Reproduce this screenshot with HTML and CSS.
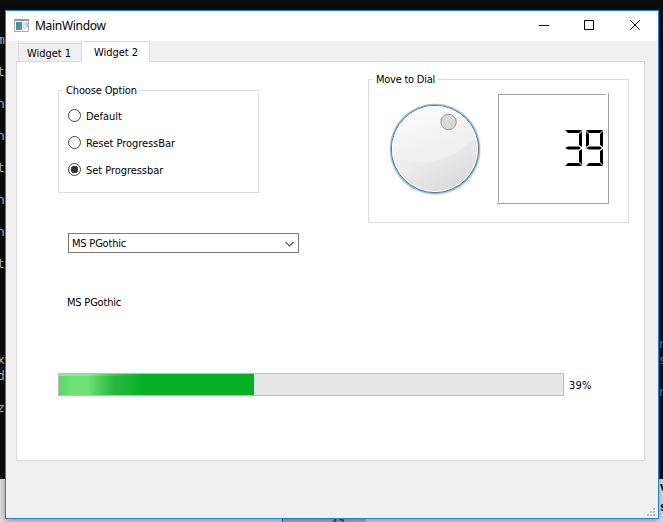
FILE: index.html
```html
<!DOCTYPE html>
<html lang="en">
<head>
<meta charset="utf-8">
<title>MainWindow</title>
<link rel="stylesheet" href="styles.css">
</head>
<body>
<div class="desktop">
<pre class="console console-left">

m

t

n

n

t

n

n

t





x
d

z</pre>
<pre class="console console-right">





















n
s

n</pre>
<div class="desktop-bottom"><span class="scrap">v<br>s</span>
<div class="taskbar"><span>43</span></div></div>
<main class="window">
  <header class="titlebar">
    <svg class="app-icon" width="16" height="14" viewBox="0 0 16 14">
      <defs><linearGradient id="app" x2="1" y2="1"><stop stop-color="#4a86a8"/><stop offset="1" stop-color="#58a878"/></linearGradient></defs>
      <path fill="#f3f4f5" stroke="#a9aeb4" d="M.5.5h14v12H.5z"/><path fill="#969ba2" d="M0 0h15v2H0z"/>
      <path fill="url(#app)" d="M2 3h6v8H2z"/><path fill="#dfe2e2" d="M9 3h3v8H9z"/><path fill="#b4d0c2" d="M12 3h2v5h-2z"/>
    </svg>
    <h1>MainWindow</h1>
    <svg class="controls" width="102" height="10" viewBox="0 0 102 10" fill="none" stroke="#000">
      <path d="M0 5.500h10M45.500.5h9v9h-9z"/><path d="M91.300.3l9.400 9.400M100.700.3l-9.400 9.400"/>
    </svg>
  </header>
  <nav class="tabs"><button class="tab">Widget 1</button><button class="tab active">Widget 2</button></nav>
  <section class="page">
    <div class="groups">
      <fieldset class="options">
        <legend><span>Choose Option</span></legend>
        <label><i class="radio"></i><span>Default</span></label>
        <label><i class="radio"></i><span>Reset ProgressBar</span></label>
        <label><i class="radio checked"></i><span>Set Progressbar</span></label>
      </fieldset>
      <fieldset class="dial-group">
        <legend><span class="dial-title">Move to Dial</span></legend>
        <div class="dial-row">
          <svg class="dial" width="94" height="94" viewBox="0 0 94 94">
            <defs>
              <linearGradient id="face" x1=".2" y1="0" x2=".7" y2="1"><stop stop-color="#fafafa"/><stop offset=".5" stop-color="#eee"/><stop offset="1" stop-color="#dadada"/></linearGradient>
              <linearGradient id="shine" x1=".2" y1="0" x2=".7" y2="1"><stop stop-color="#fff"/><stop offset=".7" stop-color="#f0f0f0"/></linearGradient>
              <clipPath id="disc"><circle cx="47" cy="47" r="43"/></clipPath>
            </defs>
            <circle cx="47.500" cy="48" r="45.500" fill="#eee"/>
            <circle cx="47" cy="47" r="45.200" fill="#8dc0e9"/>
            <circle cx="47" cy="47" r="43.500" fill="url(#face)" stroke="#596f82"/>
            <path clip-path="url(#disc)" fill="url(#shine)" d="M0 0h94v26C80 45 62 60 32 60Q16 60 0 53z"/>
            <circle cx="47" cy="47" r="42.500" fill="none" stroke="#fff"/>
            <circle cx="60.500" cy="20" r="7.700" fill="#d8d8d8" stroke="#999"/>
          </svg>
          <svg class="lcd" width="112" height="111" viewBox="0 0 112 111">
            <path fill="none" stroke="#a0a0a0" d="M1 1.500h108M1.500 1v108M0 110.500h111M111.500 0v111"/>
            <g fill="#000">
              <path d="M68 37h17l-3 3H71zM85 38v16l-3-2V41zM68 55l3-1.500h11l2 1.500-2 1.500H71zM85 56v16l-3-3V58zM68 73l3-3h11l3 3z"/>
              <path d="M89 37h17l-3 3H92zM89 38l3 3v11l-3 2zM106 38v16l-3-2V41zM89 55l3-1.500h11l2 1.500-2 1.500H92zM106 56v16l-3-3V58zM89 73l3-3h11l3 3z"/>
            </g>
          </svg>
        </div>
      </fieldset>
    </div>
    <div class="combo"><span>MS PGothic</span><svg width="9" height="6" viewBox="0 0 9 6"><path d="M.5 1l4 4 4-4" fill="none" stroke="#555" stroke-width="1.100"/></svg></div>
    <p class="font-name">MS PGothic</p>
    <div class="progress"><div class="track"><div class="fill" style="width:38.700%"></div></div><span>39%</span></div>
  </section>
  <svg class="grip" width="8" height="8" viewBox="0 0 8 8" fill="#bbb"><path d="M6 0h2v2H6zM3 3h2v2H3zM6 3h2v2H6zM0 6h2v2H0zM3 6h2v2H3zM6 6h2v2H6z"/></svg>
</main>
</div>
</body>
</html>
```
FILE: styles.css
```css
* { box-sizing: border-box; }
body { margin: 0; font: 11px/14px "DejaVu Sans Condensed", "DejaVu Sans", sans-serif; color: #000; }
.desktop { position: relative; width: 663px; height: 522px; overflow: hidden; background: #0c0c0c; }
.console { position: absolute; top: 0; margin: 0; font: 13px/16px "DejaVu Sans Mono", monospace; color: #bbb; }
.console-left { left: -3px; padding-top: 16px; }
.console-right { left: 659px; color: #5f87a8; }
.desktop-bottom { position: absolute; inset: 479px 0 0; background: #e4e4e4; }
.scrap { position: absolute; left: 660px; top: -2px; font: bold 13px/20px "Liberation Sans", sans-serif; }
.taskbar { position: absolute; left: 282px; top: 40px; width: 84px; height: 3px; overflow: hidden; border-left: 1px solid #1670bd; background: #bcbcbc; }
.taskbar span { position: absolute; left: 48px; top: -2px; font-weight: bold; color: #555; }
.window { position: absolute; left: 5px; top: 10px; width: 654px; height: 509px; border: 1px solid #1883d7; background: #f0f0f0; box-shadow: 0 2px 8px #0006; }
.titlebar { display: flex; align-items: center; height: 30px; padding: 0 17px 0 8px; background: #fff; }
.app-icon { flex: none; margin-top: -1px; }
h1 { margin: 0 auto 0 5px; font: 12px/16px "Noto Sans", sans-serif; letter-spacing: -.3px; }
.controls { flex: none; margin-top: -2px; }
.tabs { display: flex; align-items: flex-end; height: 20px; padding-left: 12px; }
.tab { width: 64px; height: 18px; padding: 2px 2px 0 0; border: 1px solid #d9d9d9; border-bottom: 0; background: #f0f0f0; font: inherit; letter-spacing: -.05px; color: #000; }
.tab.active { position: relative; width: 69px; height: 21px; margin: 0 0 -1px -1px; padding: 1px 0 0 1px; background: #fff; }
.page { width: 629px; height: 400px; margin-left: 10px; padding: 10px 15px 0 41px; border: 1px solid #d9d9d9; background: #fff; letter-spacing: -.05px; }
.groups { display: flex; justify-content: space-between; align-items: flex-start; }
fieldset { margin: 0; padding: 0; border: 1px solid #dcdcdc; min-width: 0; }
legend { height: 14px; margin-left: 5px; padding: 0 2px 0 3px; }
legend span { display: block; padding-top: 1px; letter-spacing: -.15px; }
legend .dial-title { letter-spacing: -.25px; }
.options { width: 201px; height: 110px; margin-top: 11px; }
.options legend { margin-left: 4px; }
.options label { display: flex; align-items: center; gap: 5px; height: 14px; margin: 12px 0 13px 9px; }
.options label span { padding-top: 1px; }
.options label + label { margin-top: 13px; }
.radio { width: 13px; height: 13px; margin-top: -1px; border: 1px solid #444; border-radius: 50%; background: #fff; }
.radio.checked { background: radial-gradient(circle, #333 0 3.500px, #fff 4px); }
.dial-group { width: 261px; height: 151px; }
.dial-group legend { margin-left: 4px; }
.dial-row { display: flex; gap: 15.500px; padding: 9px 0 0 18.500px; }
.dial { margin-top: 6.500px; }
.lcd { margin-top: -2px; }
.combo { display: flex; align-items: center; justify-content: space-between; width: 231px; height: 20px; margin: 10px 0 0 10px; padding: 2px 4px 0 3px; border: 1px solid #7a7a7a; letter-spacing: -.2px; }
.font-name { margin: 43px 0 0 9px; letter-spacing: -.2px; }
.progress { display: flex; align-items: center; gap: 5px; margin-top: 63px; }
.progress > span { padding-top: 2px; letter-spacing: .2px; }
.track { width: 506px; height: 23px; border: 1px solid #bcbcbc; background: #e6e6e6; }
.fill { height: 100%; background: linear-gradient(90deg, #ffffff50, transparent 45%) top / 100% 2px no-repeat, linear-gradient(90deg, #5cd765, #72e278 7%, #6ee074 15%, #28b93e 28%, #06b025 44%); }
.grip { position: absolute; right: 3px; bottom: 2px; }
```
